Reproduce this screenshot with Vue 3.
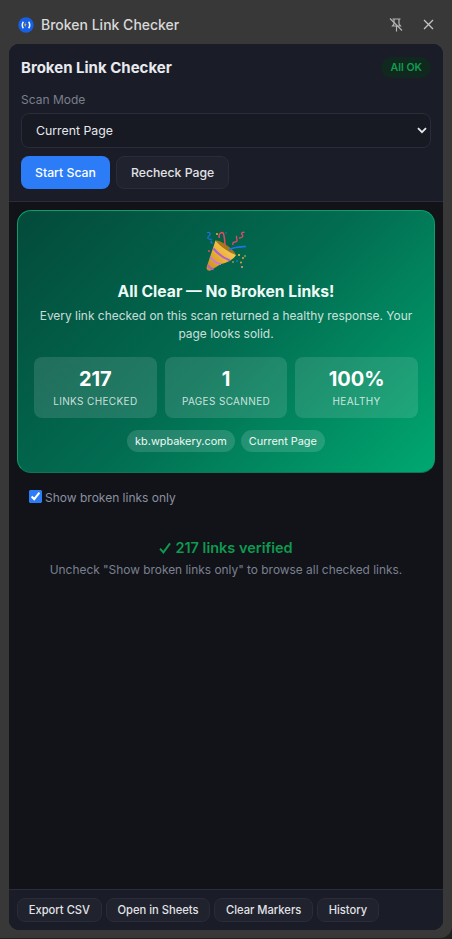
<script setup>
const stats = [
  { value: '217', label: 'LINKS CHECKED' },
  { value: '1', label: 'PAGES SCANNED' },
  { value: '100%', label: 'HEALTHY' },
]
const chips = ['kb.wpbakery.com', 'Current Page']
const footer = ['Export CSV', 'Open in Sheets', 'Clear Markers', 'History']
</script>

<template>
  <div class="shell">
    <div class="titlebar">
      <svg class="logo" viewBox="0 0 16 16" width="16" height="16">
        <circle cx="8" cy="8" r="7.7" fill="#1560e6" />
        <path d="M5.4 4.8 C3.9 6.4 3.9 9.6 5.4 11.2" fill="none" stroke="#fff" stroke-width="1.5" />
        <path d="M7.6 4.6 L6 8.4 H7.4 L6.8 11 L8.6 7.2 H7.3 Z" fill="#f6b92f" />
        <path d="M10.6 4.8 C12.1 6.4 12.1 9.6 10.6 11.2" fill="none" stroke="#fff" stroke-width="1.6" />
      </svg>
      <span class="bar-title">Broken Link Checker</span>
      <svg class="pin" viewBox="0 0 14 14" width="14" height="14" fill="none" stroke="#b4b4b4" stroke-width="1.2">
        <path d="M3.5 1 H11.5 M5 1 V6 L3.5 8 H11.5 L10 6 V1 M7.5 8 V13.5" />
        <path d="M1 0.5 L13 12.5" stroke-width="1.3" />
      </svg>
      <svg class="close" viewBox="0 0 11 11" width="11" height="11" fill="none" stroke="#c4c4c4" stroke-width="1.3">
        <path d="M1 1 L10 10 M10 1 L1 10" />
      </svg>
    </div>

    <div class="panel">
      <header class="head">
        <div class="head-row">
          <h1>Broken Link Checker</h1>
          <span class="badge">All OK</span>
        </div>
        <label class="mode-label">Scan Mode</label>
        <div class="select-wrap">
          <select class="select">
            <option>Current Page</option>
          </select>
          <svg class="chevron" viewBox="0 0 10 7" width="10" height="7" fill="none" stroke="#e6e8ec" stroke-width="1.8">
            <path d="M1 1.2 L5 5.2 L9 1.2" />
          </svg>
        </div>
        <div class="actions">
          <button class="btn primary">Start Scan</button>
          <button class="btn ghost">Recheck Page</button>
        </div>
      </header>

      <main class="body">
        <section class="hero">
          <svg class="popper" viewBox="0 0 40 40" width="40" height="40">
            <defs>
              <linearGradient id="cone" x1="0" y1="1" x2="1" y2="0">
                <stop offset="0" stop-color="#c98a1e" />
                <stop offset="0.5" stop-color="#edb236" />
                <stop offset="1" stop-color="#f9da78" />
              </linearGradient>
            </defs>
            <path d="M9.5 9.5 L30 24 C28 28 21 32 15 33 L4 39.7 C1.5 40 0 38 0.7 36 Z" fill="url(#cone)" />
            <path d="M7.4 17.5 C12 23 18 27.5 24 29.5" stroke="#ad5fd8" stroke-width="2" fill="none" />
            <path d="M4.4 26 C7.5 30 11 32.5 15 33" stroke="#c67ae2" stroke-width="2" fill="none" />
            <path d="M1.6 34 C3 36 5 38 7.5 38.2" stroke="#ad5fd8" stroke-width="1.9" fill="none" />
            <path d="M9.5 9.5 C14 8.5 28 18 30 24 C24 22 13 15 9.5 9.5 Z" fill="#a8761a" />
            <path d="M23 19 C27 16 32 16 40 15.5" stroke="#1f74e8" stroke-width="1.7" fill="none" />
            <path d="M13.5 7 C12 4 14 1.5 16.5 1.5 C18 2 18 5 18.5 8 C18.7 10 19 12 19 14" stroke="#e8485e" stroke-width="1.5" fill="none" />
            <path d="M27 14 C26 10 29 12 31 10 C32 8 29 7 31 5 M33 7 C36 7 38 5 36 3.5 C34.5 2 37 0.8 38.5 1.5" stroke="#e8486e" stroke-width="1.3" fill="none" />
            <path d="M1 1.5 C4 1 5.5 3 3 5 C0 7 3 9 6 8 M6 10 C4 10.5 5 12.5 7 12" stroke="#1f6fe0" stroke-width="1.2" fill="none" />
            <circle cx="11" cy="3" r="0.9" fill="#f5c542" /><circle cx="20" cy="2" r="0.8" fill="#1f74e8" />
            <circle cx="3" cy="20" r="1" fill="#e8485e" /><circle cx="33" cy="24" r="1" fill="#f5c542" />
            <circle cx="37" cy="27" r="1" fill="#f0a030" /><circle cx="39" cy="25" r="0.8" fill="#f5c542" />
            <circle cx="31" cy="30" r="0.9" fill="#1f74e8" /><circle cx="36" cy="36" r="1.1" fill="#f08a9a" />
            <circle cx="35" cy="31.5" r="1" fill="#f0a030" /><circle cx="27" cy="31" r="0.8" fill="#f5c542" />
          </svg>
          <h2>All Clear — No Broken Links!</h2>
          <p>Every link checked on this scan returned a healthy response. Your page looks solid.</p>
          <div class="stats">
            <div v-for="s in stats" :key="s.label" class="stat">
              <strong>{{ s.value }}</strong>
              <span>{{ s.label }}</span>
            </div>
          </div>
          <div class="chips">
            <span v-for="c in chips" :key="c" class="chip">{{ c }}</span>
          </div>
        </section>

        <label class="filter">
          <input type="checkbox" checked />
          <span>Show broken links only</span>
        </label>

        <div class="verified">
          <div class="v-title">
            <svg viewBox="0 0 12 12" width="12" height="12" fill="none" stroke="#0e9a50" stroke-width="1.9">
              <path d="M1 6.6 L4.4 10.4 L11 1.4" />
            </svg>
            <span>217 links verified</span>
          </div>
          <div class="v-sub">Uncheck "Show broken links only" to browse all checked links.</div>
        </div>
      </main>

      <footer class="foot">
        <button v-for="f in footer" :key="f" class="btn small">{{ f }}</button>
      </footer>
    </div>
  </div>
</template>

<style>
html, body { margin: 0; background: #1d221e; }
</style>

<style scoped>
* { box-sizing: border-box; }
.shell {
  width: 452px;
  height: 938px;
  background: #383838;
  border-bottom-right-radius: 12px;
  display: flex;
  flex-direction: column;
  padding: 0 9px 8px;
  font-family: Inter, "Liberation Sans", sans-serif;
  color: #e6e8ec;
}
.titlebar {
  height: 44px;
  flex: none;
  display: flex;
  align-items: center;
  padding: 5px 0 0 9px;
}
.logo { flex: none; }
.bar-title {
  margin-left: 7px;
  font-size: 14px;
  font-weight: 500;
  color: #d9d9d9;
  flex: 1;
}
.pin { margin-right: 20px; }
.close { margin-right: 9px; }
.panel {
  flex: 1;
  min-height: 0;
  display: flex;
  flex-direction: column;
  background: #111318;
  border-radius: 10px;
  overflow: hidden;
}
.head {
  background: #1a1d27;
  border-bottom: 1px solid #2a2d39;
  padding: 11px 12px 12px;
  height: 158px;
  flex: none;
}
.head-row {
  display: flex;
  justify-content: space-between;
  align-items: center;
  height: 24px;
}
h1 {
  margin: 0;
  font-size: 15px;
  font-weight: 700;
  color: #e8eaef;
}
.badge {
  font-size: 10.6px;
  font-weight: 600;
  color: #0f9d50;
  background: #10281e;
  border-radius: 11px;
  padding: 0 9px;
  height: 21px;
  line-height: 21px;
}
.mode-label {
  display: block;
  margin-top: 13px;
  font-size: 12px;
  line-height: 16px;
  color: #7a7f8e;
}
.select-wrap {
  position: relative;
  margin-top: 5px;
}
.select {
  display: block;
  width: 100%;
  height: 35px;
  appearance: none;
  background: #171a23;
  border: 1px solid #2a2d39;
  border-radius: 8px;
  color: #e6e8ec;
  font: 400 12.3px Inter, "Liberation Sans", sans-serif;
  padding: 0 14px;
}
.chevron {
  position: absolute;
  right: 4px;
  top: 14px;
  pointer-events: none;
}
.actions {
  display: flex;
  gap: 6px;
  margin-top: 8px;
}
.btn {
  font-family: Inter, "Liberation Sans", sans-serif;
  border-radius: 8px;
  height: 33px;
  font-size: 12.25px;
  font-weight: 500;
  padding: 0 14px;
  border: 1px solid transparent;
}
.primary { background: #2b7cf6; color: #fff; border: none; }
.ghost { background: #20232d; border-color: #2a2d39; color: #e0e2e7; }
.body {
  flex: 1;
  min-height: 0;
  padding: 8px 8px 0;
}
.hero {
  height: 263px;
  border: 1px solid #0c9f6c;
  border-bottom-color: #067a58;
  border-radius: 14px;
  background: linear-gradient(135deg, #034a3a 0%, #026c51 50%, #00a870 100%);
  padding: 20px 16px 0;
  text-align: center;
  display: flex;
  flex-direction: column;
  align-items: center;
}
.popper { flex: none; }
h2 {
  margin: 10px 0 0;
  font-size: 15.7px;
  line-height: 22px;
  font-weight: 700;
  color: #eefaf5;
}
.hero p {
  margin: 4px 0 0;
  font-size: 11.95px;
  line-height: 18px;
  color: rgba(255, 255, 255, 0.8);
  width: 385px;
}
.stats {
  display: grid;
  grid-template-columns: repeat(3, 1fr);
  gap: 8px;
  width: 100%;
  margin-top: 14px;
}
.stat {
  height: 61px;
  border-radius: 8px;
  background: rgba(255, 255, 255, 0.12);
  display: flex;
  flex-direction: column;
  align-items: center;
  padding-top: 10px;
}
.stat strong {
  font-size: 20px;
  line-height: 24px;
  font-weight: 700;
  color: #fff;
}
.stat span {
  margin-top: 3px;
  font-size: 10px;
  line-height: 14px;
  letter-spacing: 0.35px;
  color: rgba(255, 255, 255, 0.78);
}
.chips {
  display: flex;
  gap: 6px;
  margin-top: 12px;
}
.chip {
  height: 22px;
  line-height: 22px;
  padding: 0 8px;
  border-radius: 11px;
  font-size: 10.9px;
  font-weight: 400;
  color: #eefaf5;
  background: rgba(255, 255, 255, 0.14);
}
.filter {
  display: flex;
  align-items: center;
  margin: 16px 0 0 12px;
  font-size: 12px;
  line-height: 18px;
  color: #8b90a0;
}
.filter input {
  margin: 0 3px 3px 0;
  width: 13px;
  height: 13px;
  accent-color: #2b7cf6;
}
.verified {
  text-align: center;
  margin-top: 31px;
}
.v-title {
  display: flex;
  justify-content: center;
  align-items: center;
  gap: 4px;
  font-size: 14.5px;
  line-height: 20px;
  font-weight: 600;
  color: #0e9a50;
}
.v-sub {
  margin-top: 3px;
  font-size: 11.9px;
  line-height: 18px;
  color: #7b8090;
}
.foot {
  flex: none;
  height: 41px;
  background: #1a1d27;
  border-top: 1px solid #2a2d39;
  display: flex;
  gap: 4px;
  padding: 8px;
}
.small {
  height: 24px;
  font-size: 11.2px;
  padding: 0 10.7px;
  background: #20232d;
  border-color: #2a2d39;
  color: #e0e2e7;
}
</style>
